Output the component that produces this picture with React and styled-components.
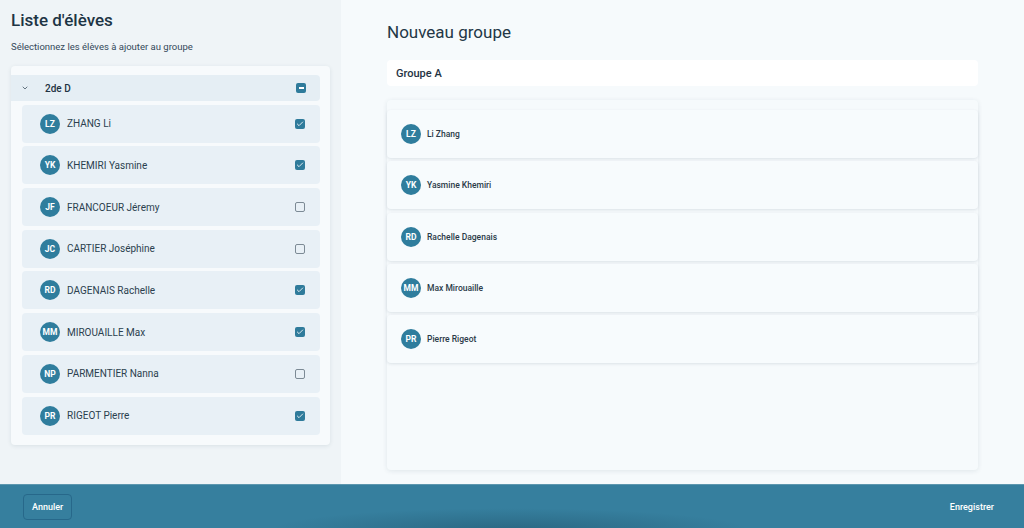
import React from 'react';
import styled, { createGlobalStyle } from 'styled-components';
import { ChevronDown, Check } from 'lucide-react';

const GlobalStyle = createGlobalStyle`
  body {
    margin: 0;
    font-family: Roboto, 'Liberation Sans', sans-serif;
    color: #233746;
  }
  * { box-sizing: border-box; }
`;

const Page = styled.div`
  height: 100vh;
  display: grid;
  grid-template-rows: 1fr 44px;
  overflow: hidden;
`;

const Main = styled.div`
  display: grid;
  grid-template-columns: 341px 1fr;
  min-height: 0;
`;

const LeftPanel = styled.section`
  background: #eff4f7;
  padding: 10px 11px;
  display: flex;
  flex-direction: column;
`;

const Title = styled.h1`
  margin: 0;
  font-size: 17px;
  font-weight: 500;
  line-height: 20px;
  color: #1d3445;
`;

const Subtitle = styled.p`
  margin: 11px 0 0;
  font-size: 9.5px;
  line-height: 12px;
  color: #34495a;
`;

const Card = styled.div`
  margin-top: 13px;
  width: 319px;
  background: #f7fafc;
  border-radius: 4px;
  box-shadow: 0 1px 4px rgba(30, 60, 80, 0.1);
  padding: 9px 10px 10px 0;
  display: flex;
  flex-direction: column;
  gap: 3.7px;
`;

const GroupRow = styled.div`
  height: 26px;
  background: #e5eef4;
  border-radius: 0 4px 4px 0;
  display: flex;
  align-items: center;
  padding: 0 14px 0 10px;
  font-size: 10px;
  font-weight: 500;
  color: #1f3343;
`;

const Chevron = styled.span`
  display: flex;
  width: 10px;
  margin-right: 14px;
  color: #4b5d6a;
`;

const Grow = styled.span`
  flex: 1;
`;

const StudentRow = styled.div`
  height: 38px;
  margin-left: 11px;
  background: #e8f0f6;
  border-radius: 4px;
  display: flex;
  align-items: center;
  padding: 0 15px 0 18px;
  font-size: 10px;
  color: #2b3f4e;
`;

const Avatar = styled.span`
  width: ${(p) => p.size}px;
  height: ${(p) => p.size}px;
  flex: none;
  border-radius: 50%;
  background: #2f7d9d;
  color: #fff;
  font-size: 8.5px;
  font-weight: 700;
  display: flex;
  align-items: center;
  justify-content: center;
  margin-right: ${(p) => p.gap}px;
`;

const Box = styled.span`
  width: 10px;
  height: 10px;
  border-radius: 2px;
  display: flex;
  align-items: center;
  justify-content: center;
  background: ${(p) => (p.on ? '#2f7b9b' : 'transparent')};
  border: ${(p) => (p.on ? 'none' : '1.3px solid #7c8a95')};
`;

const Dash = styled.span`
  width: 5px;
  height: 1.5px;
  background: #fff;
`;

const RightPanel = styled.section`
  background: #f6fafc;
  padding: 20px 46px 14px 46px;
  display: flex;
  flex-direction: column;
`;

const Heading = styled.h2`
  margin: 2px 0 0;
  font-size: 17px;
  font-weight: 400;
  line-height: 20px;
  color: #233746;
`;

const NameInput = styled.div`
  margin-top: 18px;
  height: 26px;
  background: #fff;
  border-radius: 4px;
  display: flex;
  align-items: center;
  padding: 0 9px;
  font-size: 11px;
  font-weight: 500;
  color: #1f3343;
`;

const MemberList = styled.div`
  margin-top: 14px;
  flex: 1;
  background: #f6fafc;
  border-radius: 4px;
  box-shadow: 0 1px 5px rgba(30, 60, 80, 0.1);
  padding-top: 10px;
  display: flex;
  flex-direction: column;
  gap: 3.3px;
`;

const Member = styled.div`
  height: 48px;
  background: #f7fbfd;
  border-radius: 4px;
  box-shadow: 0 1px 3px rgba(30, 60, 80, 0.12);
  display: flex;
  align-items: center;
  padding-left: 14px;
  font-size: 8.5px;
  font-weight: 500;
  color: #2a3a48;
`;

const Footer = styled.footer`
  background: radial-gradient(ellipse 240px 22px at 510px 105%, rgba(20, 60, 80, 0.35), transparent),
    #367f9e;
  border-top: 1px solid #5d97af;
  display: flex;
  align-items: center;
  justify-content: space-between;
  padding: 0 24px 0 23px;
`;

const OutlineButton = styled.button`
  height: 26px;
  padding: 0 8px;
  background: transparent;
  border: 1px solid #27688a;
  border-radius: 4px;
  color: #fff;
  font-family: inherit;
  font-size: 9px;
  font-weight: 500;
`;

const TextButton = styled.button`
  background: none;
  border: none;
  color: #fff;
  font-family: inherit;
  font-size: 9px;
  font-weight: 500;
`;

const students = [
  { i: 'LZ', name: 'ZHANG Li', on: true },
  { i: 'YK', name: 'KHEMIRI Yasmine', on: true },
  { i: 'JF', name: 'FRANCOEUR Jéremy', on: false },
  { i: 'JC', name: 'CARTIER Joséphine', on: false },
  { i: 'RD', name: 'DAGENAIS Rachelle', on: true },
  { i: 'MM', name: 'MIROUAILLE Max', on: true },
  { i: 'NP', name: 'PARMENTIER Nanna', on: false },
  { i: 'PR', name: 'RIGEOT Pierre', on: true },
];

const members = [
  { i: 'LZ', name: 'Li Zhang' },
  { i: 'YK', name: 'Yasmine Khemiri' },
  { i: 'RD', name: 'Rachelle Dagenais' },
  { i: 'MM', name: 'Max Mirouaille' },
  { i: 'PR', name: 'Pierre Rigeot' },
];

export default function App() {
  return (
    <Page>
      <GlobalStyle />
      <Main>
        <LeftPanel>
          <Title>Liste d'élèves</Title>
          <Subtitle>Sélectionnez les élèves à ajouter au groupe</Subtitle>
          <Card>
            <GroupRow>
              <Chevron>
                <ChevronDown size={8} strokeWidth={2.5} />
              </Chevron>
              <Grow>2de D</Grow>
              <Box on>
                <Dash />
              </Box>
            </GroupRow>
            {students.map((s) => (
              <StudentRow key={s.i}>
                <Avatar size={20} gap={7}>{s.i}</Avatar>
                <Grow>{s.name}</Grow>
                <Box on={s.on}>
                  {s.on && <Check size={8} color="#fff" strokeWidth={2.5} />}
                </Box>
              </StudentRow>
            ))}
          </Card>
        </LeftPanel>
        <RightPanel>
          <Heading>Nouveau groupe</Heading>
          <NameInput>Groupe A</NameInput>
          <MemberList>
            {members.map((m) => (
              <Member key={m.i}>
                <Avatar size={20} gap={6}>{m.i}</Avatar>
                {m.name}
              </Member>
            ))}
          </MemberList>
        </RightPanel>
      </Main>
      <Footer>
        <OutlineButton>Annuler</OutlineButton>
        <TextButton>Enregistrer</TextButton>
      </Footer>
    </Page>
  );
}
